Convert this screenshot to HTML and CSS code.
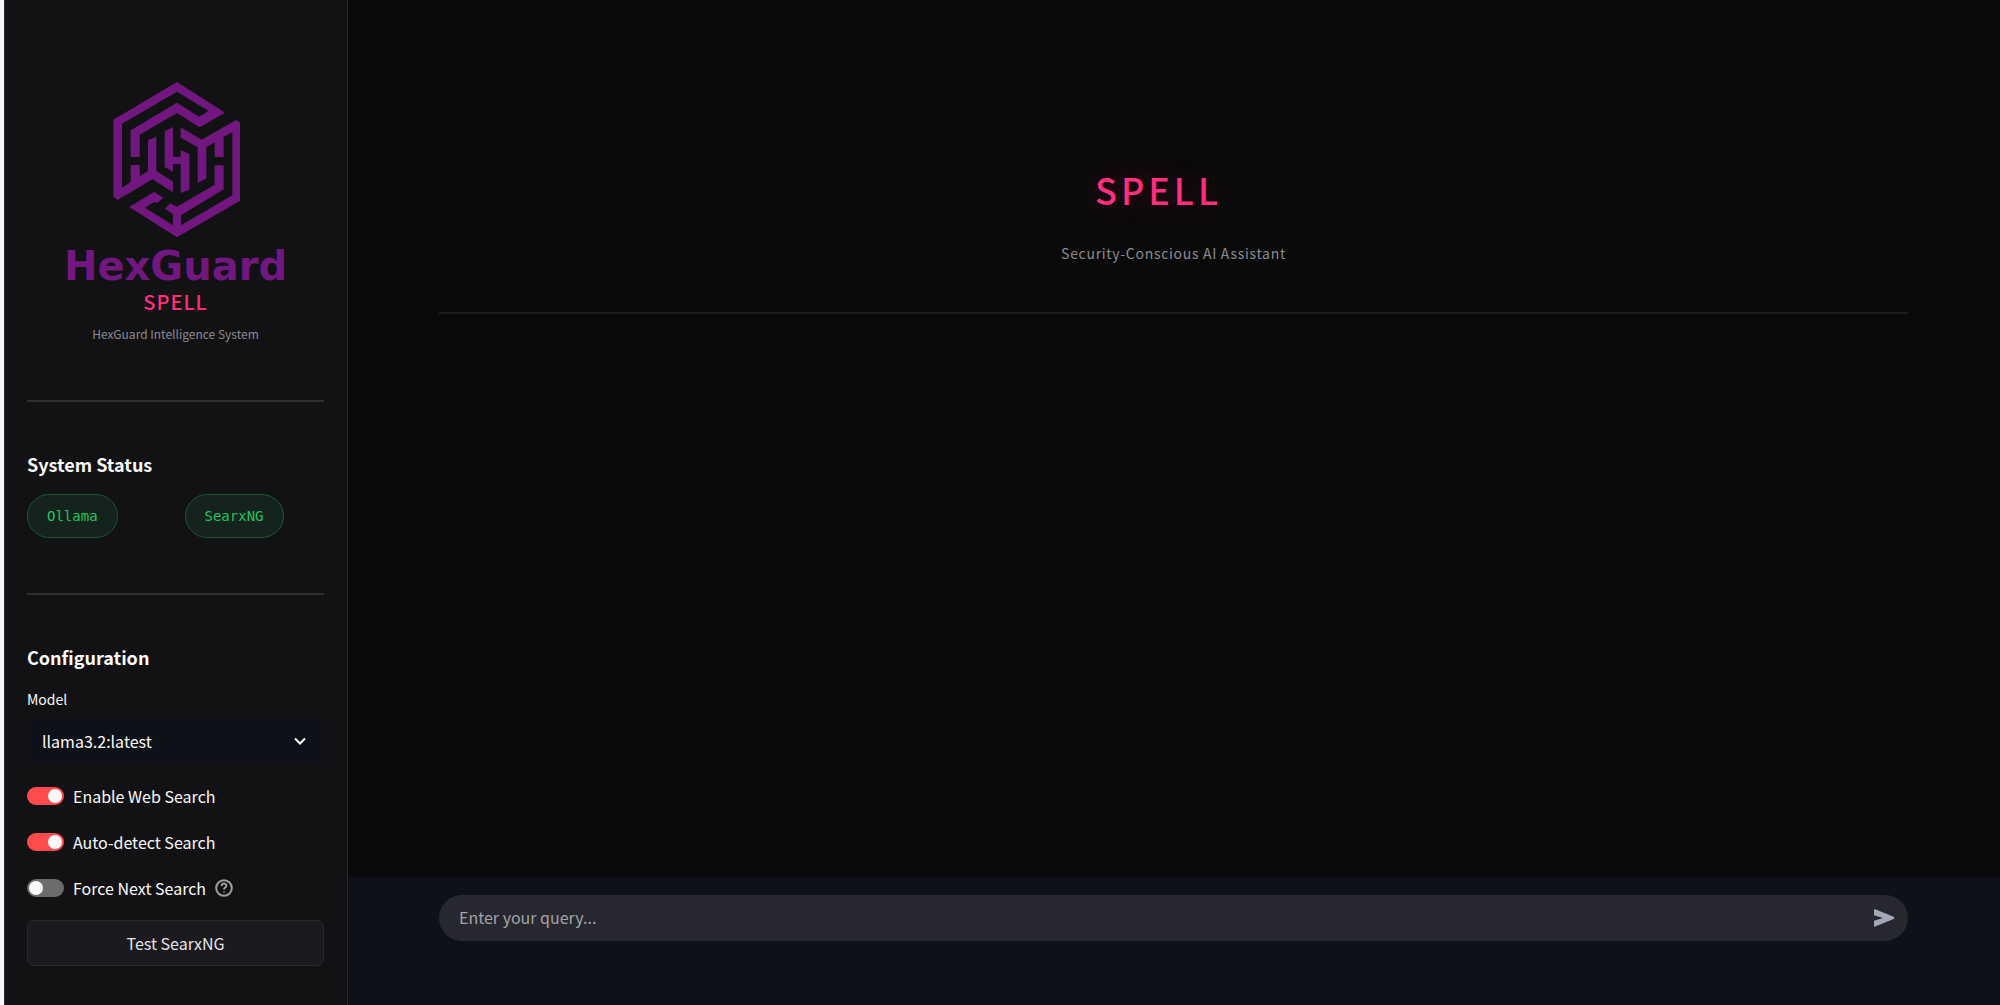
FILE: index.html
```html
<!DOCTYPE html>
<html lang="en">
<head>
    <meta charset="UTF-8">
    <meta name="viewport" content="width=device-width, initial-scale=1.0">
    <title>SPELL - HexGuard Intelligence System</title>
    <link rel="stylesheet" href="styles.css">
</head>
<body>
    <aside class="sidebar">
        <div class="brand">
            <svg class="brand-mark" viewBox="0 0 384 468" aria-hidden="true">
                <path d="M4 113L195 0L339 92L263 136L195 93L83 158V225H56V145L195 62L261 104L290 87L195 29L30 125V317L121 259L183 299V331L121 292L18 353L4 345Z"/>
                <path d="M56 249H83V300L56 316Z"/>
                <path d="M108 175L133 164V280L108 292Z"/>
                <path d="M158 148L183 135V225H206V204L232 216V323L206 333V246H183V270L158 255Z"/>
                <path d="M206 136L269 173L372 114L386 123V355L195 466L52 375L126 330L154 347L135 363L126 360L99 377L183 430V397L159 380L175 364L195 374L308 308V250H335V322L207 400V430L361 340V150L335 165V225H308V181L283 196V289L257 303V196L206 167Z"/>
            </svg>
            <div class="brand-word">HexGuard</div>
            <div class="brand-name">SPELL</div>
            <div class="brand-sub">HexGuard Intelligence System</div>
        </div>
        <hr class="divider">
        <h3>System Status</h3>
        <div class="status-row">
            <div><span class="badge">Ollama</span></div>
            <div><span class="badge">SearxNG</span></div>
        </div>
        <hr class="divider">
        <h3>Configuration</h3>
        <label class="field-label" for="model">Model</label>
        <div class="select-wrap">
            <select id="model">
                <option>llama3.2:latest</option>
            </select>
            <svg class="chevron" viewBox="0 0 12 8" aria-hidden="true"><path d="M1 1.5L6 6.5L11 1.5"/></svg>
        </div>
        <div class="toggles">
            <label class="toggle"><input type="checkbox" checked>Enable Web Search</label>
            <label class="toggle"><input type="checkbox" checked>Auto-detect Search</label>
            <label class="toggle"><input type="checkbox">Force Next Search
                <svg class="help" viewBox="0 0 18 18" aria-hidden="true">
                    <circle cx="9" cy="9" r="7.8"/>
                    <path d="M6.6 7C6.7 3.8 11.5 3.9 11.4 6.8C11.3 8.6 9 8.5 9 10.5M9 12.4V13.6"/>
                </svg>
            </label>
        </div>
        <button class="test-button" type="button">Test SearxNG</button>
    </aside>
    <main>
        <header class="page-header">
            <h1>SPELL</h1>
            <p>Security-Conscious AI Assistant</p>
        </header>
        <form class="chat-bar">
            <div class="chat-input">
                <input type="text" aria-label="Query" placeholder="Enter your query...">
                <button type="button" aria-label="Send">
                    <svg viewBox="0 0 21 18" aria-hidden="true"><path d="M0 1.2Q0 0 1.2 .3L19.6 7.7Q21.2 9 19.6 10.1L1.2 17.6Q0 18 0 16.8V11.8L9 9L0 6.2Z"/></svg>
                </button>
            </div>
        </form>
    </main>
</body>
</html>
```
FILE: styles.css
```css
* {
    box-sizing: border-box;
}
body {
    margin: 0;
    min-height: 100vh;
    display: flex;
    border-left: 4px solid #f3f6fb;
    background-color: #0a0a0a;
    color: #fafafa;
    font-family: "Noto Sans CJK SC", "Open Sans", sans-serif;
    font-size: 16px;
    line-height: 24px;
}
.sidebar {
    flex: 0 0 344px;
    padding: 82px 23px 36px 22px;
    background-color: #121214;
    border-right: 1px solid #2a2a2e;
    border-left: 1px solid #2a2a2e;
}
.brand {
    display: flex;
    flex-direction: column;
    align-items: center;
    text-align: center;
}
.brand-mark {
    width: 128px;
    height: 156px;
    fill: #71177f;
}
.brand-word {
    margin-top: 8px;
    color: #71177f;
    font-family: "DejaVu Sans", sans-serif;
    font-size: 40px;
    font-weight: 700;
    line-height: 40px;
}
.brand-name {
    margin-top: 2px;
    color: #ff2e7e;
    font-size: 20px;
    font-weight: 500;
    line-height: 28px;
    letter-spacing: 1px;
}
.brand-sub {
    margin-top: 6px;
    color: #8a8a92;
    font-size: 12px;
}
.divider {
    height: 2px;
    margin: 54px 0 50px;
    border: 0;
    background-color: #303032;
}
h3 {
    margin: 0 0 18px;
    font-size: 18px;
    font-weight: 700;
    line-height: 24px;
}
.status-row {
    display: grid;
    grid-template-columns: 1fr 1fr;
    gap: 18px;
    margin-bottom: 55px;
}
.badge {
    display: inline-block;
    padding: 9px 19px;
    border: 1px solid #1b5632;
    border-radius: 22px;
    background-color: #14231d;
    color: #22c55e;
    font-family: "DejaVu Sans Mono", monospace;
    font-size: 14px;
}
.field-label {
    display: block;
    font-size: 14px;
}
.select-wrap {
    position: relative;
    margin-top: 8px;
}
select {
    appearance: none;
    width: 100%;
    height: 44px;
    padding: 0 15px;
    border: 0;
    border-radius: 8px;
    background-color: #0e1118;
    color: #fafafa;
    font: inherit;
}
.chevron {
    position: absolute;
    right: 18px;
    top: 18px;
    width: 12px;
    height: 8px;
    fill: none;
    stroke: #fafafa;
    stroke-width: 2;
    pointer-events: none;
}
.toggles {
    display: flex;
    flex-direction: column;
    gap: 22px;
    margin-top: 21px;
}
.toggle {
    display: flex;
    align-items: center;
    gap: 9px;
}
.toggle input {
    appearance: none;
    flex: none;
    display: flex;
    align-items: center;
    width: 37px;
    height: 18px;
    margin: 0;
    padding: 0 2px;
    border-radius: 9px;
    background-color: #6c6c6e;
}
.toggle input::before {
    content: "";
    width: 14px;
    height: 14px;
    border-radius: 50%;
    background-color: #fafafa;
}
.toggle input:checked {
    justify-content: flex-end;
    background-color: #ff4b4b;
}
.help {
    width: 18px;
    height: 18px;
    fill: none;
    stroke: #a0a0a1;
    stroke-width: 2;
}
.test-button {
    width: 100%;
    height: 46px;
    margin-top: 20px;
    border: 1px solid #2a2a2e;
    border-radius: 7px;
    background-color: #1a1a1f;
    color: #e4e4e7;
    font: inherit;
}
main {
    flex: 1;
    display: flex;
    flex-direction: column;
    justify-content: space-between;
}
.page-header {
    margin: 0 92px 0 91px;
    padding: 162px 0 47px;
    border-bottom: 2px solid #1d1d21;
    text-align: center;
}
h1 {
    margin: 0 30px 0 0;
    color: #ff2e7e;
    font-size: 36px;
    font-weight: 500;
    line-height: 54px;
    letter-spacing: 4px;
    text-shadow: 0 0 30px rgba(255, 46, 126, 0.3);
}
.page-header p {
    margin: 25px 0 0;
    color: #8a8a92;
    font-size: 14px;
    letter-spacing: 0.05em;
}
.chat-bar {
    padding: 18px 92px 64px 91px;
    background-color: #0e1118;
}
.chat-input {
    display: flex;
    align-items: center;
    height: 46px;
    padding: 0 13px 0 20px;
    border-radius: 23px;
    background-color: #272730;
}
.chat-input input {
    flex: 1;
    padding: 0 0 3px;
    border: 0;
    outline: none;
    background: none;
    color: #fafafa;
    font: inherit;
}
.chat-input input::placeholder {
    color: #a3a3a8;
}
.chat-input button {
    display: flex;
    padding: 0;
    border: 0;
    background: none;
}
.chat-input svg {
    width: 21px;
    height: 18px;
    fill: #a3a8b8;
}
```
